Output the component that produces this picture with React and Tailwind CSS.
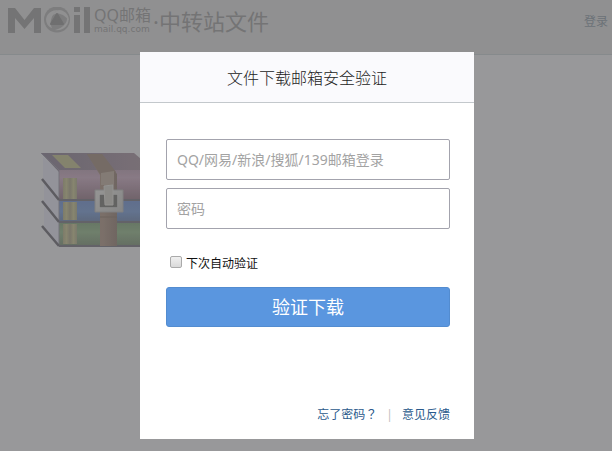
import { useState } from "react";

function MailLogo() {
  return (
    <svg width="84" height="28" viewBox="0 0 84 28" fill="#747475" aria-hidden="true">
      <path d="M0 26V1h7l9.500 12L26 1h7v25h-7V11l-9.500 11L7 11v15z" />
      <circle cx="49" cy="12.500" r="13" fill="#7d7d7e" />
      <path d="M38 12c1-6 6-9 12-9-3 2-6 5-7 10-1 3 0 6 1 8-4-1-6-5-6-9z" fill="#909091" />
      <path d="M52 3c6 1 9 6 9 11-2-3-5-6-9-7-3-1-5 0-7 1 1-3 4-5 7-5z" fill="#909091" />
      <path d="M60 16c-2 5-7 8-13 7 4-1 8-3 10-6 2-2 2-5 2-7 1 1 2 4 1 6z" fill="#909091" />
      <path d="M49 7l6 10H43z" fill="#6f6f70" stroke="#6f6f70" strokeWidth="2" strokeLinejoin="round" />
      <path d="M66 8h6v18h-6zM66 0h6v5h-6zM76 0h6v26h-6z" />
    </svg>
  );
}

function ArchiveIcon() {
  return (
    <svg width="116" height="96" viewBox="0 0 116 96" className="opacity-80" aria-hidden="true">
      <defs>
        <linearGradient id="plum" x1="0" y1="0" x2="0" y2="1">
          <stop offset="0" stopColor="#7d6d79" />
          <stop offset="0.250" stopColor="#857380" />
          <stop offset="1" stopColor="#67565f" />
        </linearGradient>
        <linearGradient id="blue" x1="0" y1="0" x2="0" y2="1">
          <stop offset="0" stopColor="#53658a" />
          <stop offset="0.500" stopColor="#566a8c" />
          <stop offset="1" stopColor="#505d75" />
        </linearGradient>
        <linearGradient id="green" x1="0" y1="0" x2="0" y2="1">
          <stop offset="0" stopColor="#5c7059" />
          <stop offset="0.400" stopColor="#667a61" />
          <stop offset="1" stopColor="#586455" />
        </linearGradient>
        <linearGradient id="top" x1="0" y1="0" x2="1" y2="0">
          <stop offset="0" stopColor="#605a66" />
          <stop offset="1" stopColor="#71656d" />
        </linearGradient>
        <linearGradient id="gold" x1="0" y1="0" x2="1" y2="0">
          <stop offset="0" stopColor="#77755e" />
          <stop offset="0.250" stopColor="#838165" />
          <stop offset="0.500" stopColor="#736f5f" />
          <stop offset="0.750" stopColor="#838165" />
          <stop offset="1" stopColor="#747260" />
        </linearGradient>
        <linearGradient id="strap" x1="0" y1="0" x2="1" y2="0">
          <stop offset="0" stopColor="#6c5f56" />
          <stop offset="0.500" stopColor="#75675e" />
          <stop offset="1" stopColor="#665a54" />
        </linearGradient>
        <linearGradient id="metal" x1="0" y1="0" x2="1" y2="1">
          <stop offset="0" stopColor="#959594" />
          <stop offset="1" stopColor="#828281" />
        </linearGradient>
      </defs>
      <path d="M2 4l16 15v28L2 27zM3 31l15 17v21L3 49zM3 54l15 16v22L3 73z" fill="#93939b" />
      <path d="M0 0h93l7 6v13H18z" fill="url(#top)" />
      <path d="M11 2h16l13 13H24z" fill="#807e63" />
      <path d="M18 17h98v30H18z" fill="url(#plum)" />
      <path d="M18 48h98v21H18z" fill="url(#blue)" />
      <path d="M18 70h98v23H18z" fill="url(#green)" />
      <path d="M22 25h14v21H22zM22 49h14v18H22zM22 71h14v20H22z" fill="url(#gold)" />
      <path d="M0 0l18 17v76" fill="none" stroke="#6a6873" />
      <path d="M1 26l17 21M1 48l17 21M1 73l17 20" fill="none" stroke="#4f4e54" strokeWidth="2.500" />
      <path d="M18 47h98M18 69h98M18 93h98" fill="none" stroke="#56555c" strokeWidth="2" />
      <path d="M46 1h15l15 20v72H59V22z" fill="url(#strap)" />
      <path d="M46 1h15l14 18-15 3z" fill="#6d6059" />
      <path d="M60 20l13-2v14H60z" fill="#7e756c" />
      <path d="M54 37h28v22H54zM59 42v12h17V42z" fill="url(#metal)" fillRule="evenodd" stroke="#7b7b7a" />
      <path d="M59 42h17v12H59z" fill="#575655" />
      <path d="M63 33l9-1v20h-8z" fill="#888783" stroke="#92918e" />
      <path d="M59 64h17" stroke="#62564f" />
    </svg>
  );
}

function BackgroundPage() {
  return (
    <div className="min-h-screen bg-[#98989a]">
      <header className="flex h-[55px] items-start justify-between border-b border-[#868a8c] bg-[#909091] pr-1 pl-2">
        <div className="flex items-start gap-0.5 pt-[7px] text-[#747475]">
          <MailLogo />
          <div>
            <div className="text-base leading-4">QQ邮箱</div>
            <div className="font-['DejaVu_Sans',sans-serif] text-[9px] leading-3">mail.qq.com</div>
          </div>
          <h1 className="text-[22px] leading-7">·中转站文件</h1>
        </div>
        <a href="#login" className="pt-3 text-xs leading-5 text-[#6c7278]">登录</a>
      </header>
      <main className="px-[41px] pt-[98px]">
        <ArchiveIcon />
      </main>
    </div>
  );
}

function TextField({ id, type, label, value, onChange }) {
  return (
    <input
      id={id}
      type={type}
      aria-label={label}
      placeholder={label}
      value={value}
      onChange={(e) => onChange(e.target.value)}
      className="h-[41px] w-full rounded-xs border border-[#a3a3ad] bg-white px-2.5 text-sm text-[#333333] outline-none placeholder:text-[#a3a3a3]"
    />
  );
}

function VerifyDialog() {
  const [account, setAccount] = useState("");
  const [password, setPassword] = useState("");
  const [remember, setRemember] = useState(false);

  return (
    <section role="dialog" aria-labelledby="dialog-title" className="flex min-h-[387px] w-[334px] flex-col bg-white">
      <header className="border-b border-[#c3c8cc] bg-[#fafafd] pt-3.5 pb-3 text-center">
        <h2 id="dialog-title" className="text-base leading-6 font-light text-[#222222]">文件下载邮箱安全验证</h2>
      </header>
      <form className="flex flex-1 flex-col pt-9 pr-6 pb-3.5 pl-[26px]" onSubmit={(e) => e.preventDefault()}>
        <div className="flex flex-col gap-2">
          <TextField id="account" type="text" label="QQ/网易/新浪/搜狐/139邮箱登录" value={account} onChange={setAccount} />
          <TextField id="password" type="password" label="密码" value={password} onChange={setPassword} />
        </div>
        <div className="flex items-start gap-1 pt-[25px] pl-1">
          <input
            id="remember"
            type="checkbox"
            checked={remember}
            onChange={(e) => setRemember(e.target.checked)}
            className="mt-0.5 size-3 appearance-none rounded-xs border border-[#aaaaaa] bg-linear-to-b from-[#f0f0f0] to-[#d9d9d9] checked:bg-[#5a96df]"
          />
          <label htmlFor="remember" className="text-xs leading-5 text-[#111111]">下次自动验证</label>
        </div>
        <button type="submit" className="mt-[13px] h-10 rounded-[3px] border border-[#538cd0] bg-[#5a96df] text-lg text-white">
          验证下载
        </button>
        <div className="mt-auto flex items-baseline justify-end gap-[9px] text-xs leading-5 text-[#2b5a8c]">
          <a href="#forgot">忘了密码<span className="font-['Noto_Sans_CJK_TC',sans-serif]" lang="zh-TW">？</span></a>
          <span className="text-[#c0c0c0]">|</span>
          <a href="#feedback">意见反馈</a>
        </div>
      </form>
    </section>
  );
}

export default function App() {
  return (
    <div className="relative font-['Noto_Sans','Noto_Sans_CJK_SC',sans-serif]">
      <BackgroundPage />
      <div className="absolute inset-0 flex items-start justify-center pt-[52px] pl-0.5">
        <VerifyDialog />
      </div>
    </div>
  );
}
